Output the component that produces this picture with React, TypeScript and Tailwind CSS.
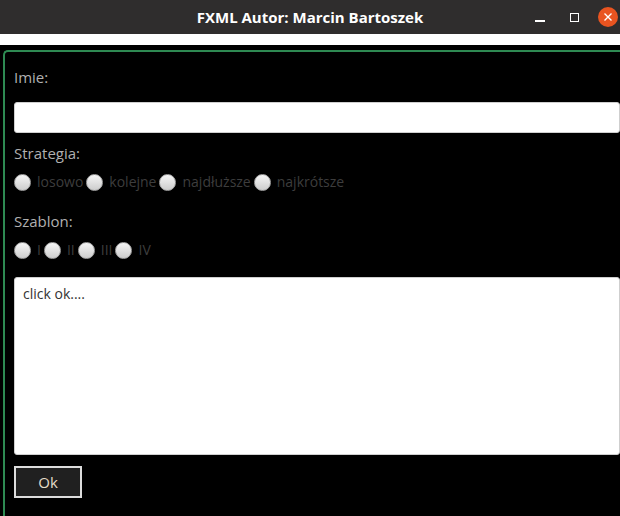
import { useState } from "react";

const strategies = ["losowo", "kolejne", "najdłuższe", "najkrótsze"];
const templates = ["I", "II", "III", "IV"];

function Radio({ label, checked, onClick }: { label: string; checked: boolean; onClick: () => void }) {
  return (
    <div onClick={onClick} className="flex items-center cursor-pointer">
      <span className="w-[17px] h-[17px] rounded-full bg-linear-to-b from-[#f6f6f6] to-[#cdcdcd] border border-[#a8a8a8] flex items-center justify-center shrink-0">
        {checked && <span className="w-[7px] h-[7px] rounded-full bg-[#333]" />}
      </span>
      <span className="ml-[6px] mr-[3px] text-[14px] leading-[18px] text-[#3d3d3d]">{label}</span>
    </div>
  );
}

export default function App() {
  const [strategy, setStrategy] = useState<string | null>(null);
  const [template, setTemplate] = useState<string | null>(null);

  return (
    <div className="w-[620px] h-[516px] bg-black overflow-hidden flex flex-col" style={{ fontFamily: '"Open Sans", "Noto Sans", sans-serif' }}>
      {/* title bar */}
      <div className="h-[34px] bg-[#2f2d2d] flex items-center relative shrink-0">
        <p className="w-full text-center text-white text-[15px] font-bold">FXML Autor: Marcin Bartoszek</p>
        <div className="absolute right-[2px] top-0 h-full flex items-center">
          <span className="w-[10px] h-[1.5px] bg-white mt-[8px] mr-[25px]" />
          <span className="w-[9px] h-[9px] border border-white mr-[19px]" />
          <span className="w-[20px] h-[20px] rounded-full bg-[#e95420] flex items-center justify-center">
            <svg width="10" height="10" viewBox="0 0 10 10">
              <path d="M1.5 1.5 L8.5 8.5 M8.5 1.5 L1.5 8.5" stroke="white" strokeWidth="1.4" />
            </svg>
          </span>
        </div>
      </div>
      <div className="h-[11px] bg-white shrink-0" />

      {/* form */}
      <div className="flex-1 mt-[5px] ml-[3px] border-l-2 border-t-2 border-[#2e8a52] rounded-tl-[5px] pl-[9px] flex flex-col">
        <p className="mt-[15px] text-[15px] leading-[20px] text-[#b0b0b0]">Imie:</p>
        <input className="mt-[15px] h-[31px] w-full rounded-[3px] bg-white border border-[#cfcfcf] px-2 text-[14px] outline-none" />

        <p className="mt-[10px] text-[15px] leading-[20px] text-[#b0b0b0]">Strategia:</p>
        <div className="mt-[10px] flex items-center">
          {strategies.map((s) => (
            <Radio key={s} label={s} checked={strategy === s} onClick={() => setStrategy(s)} />
          ))}
        </div>

        <p className="mt-[20px] text-[15px] leading-[20px] text-[#b0b0b0]">Szablon:</p>
        <div className="mt-[10px] flex items-center">
          {templates.map((t) => (
            <Radio key={t} label={t} checked={template === t} onClick={() => setTemplate(t)} />
          ))}
        </div>

        <textarea
          defaultValue="click ok...."
          className="mt-[18px] h-[178px] w-full rounded-[3px] bg-white border border-[#cfcfcf] px-[8px] py-[5px] text-[14px] text-[#333] resize-none outline-none"
        />

        <button className="mt-[11px] w-[68px] h-[32px] border-2 border-[#dcdcdc] bg-[#202020] text-[#e4dcc8] text-[15px]">
          Ok
        </button>
      </div>
    </div>
  );
}
